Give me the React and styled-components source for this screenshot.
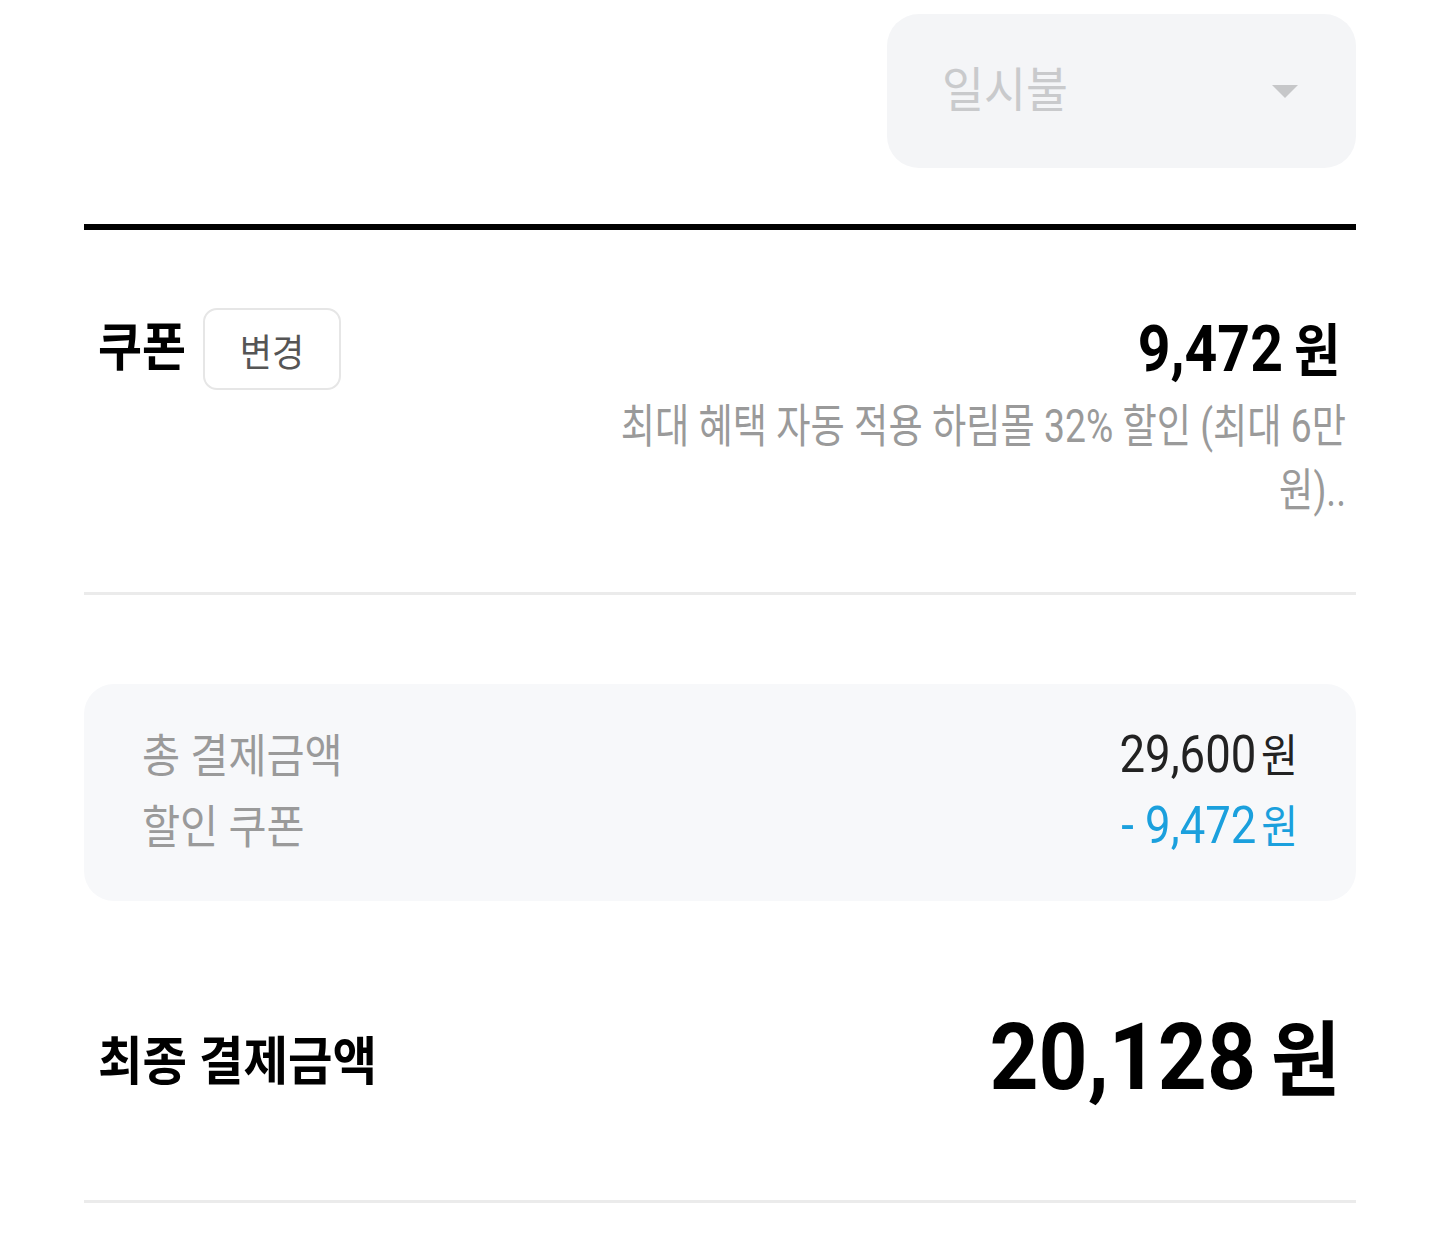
import React from "react";
import styled, { createGlobalStyle } from "styled-components";

const Global = createGlobalStyle`
  html, body { margin: 0; padding: 0; background: #ffffff; }
  body { font-family: Roboto, "Noto Sans CJK KR", sans-serif; color: #111; }
  * { box-sizing: border-box; }
`;

const Page = styled.main`
  width: 1440px;
  padding: 14px 84px 56px;
  display: flex;
  flex-direction: column;
`;

const Squeeze = styled.span`
  display: inline-block;
  white-space: nowrap;
  transform: scaleX(${(p) => p.$sx ?? 0.82});
  transform-origin: ${(p) => p.$origin ?? "left"} center;
`;

const Unit = styled.span`
  font-size: ${(p) => p.$scale ?? 0.88}em;
  margin-left: ${(p) => p.$gap ?? 0.18}em;
`;

/* ---------- installment select ---------- */
const SelectBox = styled.div`
  align-self: flex-end;
  width: 469px;
  height: 154px;
  border-radius: 32px;
  background: #f4f5f7;
  display: flex;
  align-items: center;
  justify-content: space-between;
  padding: 0 58px 0 55px;
`;

const SelectText = styled.span`
  font-size: 48px;
  color: #c9cacc;
  line-height: 1;
`;

const Caret = styled.svg`
  width: 26px;
  height: 13px;
  display: block;
`;

/* ---------- rules ---------- */
const ThickRule = styled.hr`
  margin: 56px 0 0;
  border: 0;
  height: 6px;
  background: #000;
`;

const ThinRule = styled.hr`
  margin: ${(p) => p.$top ?? 0}px 0 0;
  border: 0;
  height: 3px;
  background: #ebebeb;
`;

/* ---------- coupon ---------- */
const CouponSection = styled.section`
  padding: 78px 16px 70px 14px;
  display: flex;
  flex-direction: column;
`;

const CouponHead = styled.div`
  display: flex;
  align-items: center;
  justify-content: space-between;
`;

const TitleGroup = styled.div`
  display: flex;
  align-items: center;
  gap: 9px;
`;

const SectionTitle = styled.h2`
  margin: 0;
  font-size: 52px;
  font-weight: 700;
  line-height: 1;
  color: #000;
`;

const ChangeButton = styled.button`
  width: 138px;
  height: 82px;
  border: 2px solid #e6e6e6;
  border-radius: 14px;
  background: #fff;
  font-family: inherit;
  font-size: 38px;
  color: #555;
  display: flex;
  align-items: center;
  justify-content: center;
  padding: 0;
`;

const CouponAmount = styled.div`
  font-size: 65px;
  font-weight: 700;
  line-height: 1;
  color: #000;
`;

const CouponDesc = styled.p`
  margin: 4px -6px 0 auto;
  width: 920px;
  font-size: 46px;
  line-height: 64px;
  color: #9a9a9a;
  text-align: right;
  transform: scaleX(0.81);
  transform-origin: right top;
`;

/* ---------- summary ---------- */
const SummaryBox = styled.section`
  margin-top: 89px;
  background: #f7f8fa;
  border-radius: 30px;
  padding: 32px 58px 43px;
  display: flex;
  flex-direction: column;
`;

const SummaryRow = styled.div`
  display: flex;
  align-items: center;
  justify-content: space-between;
  height: 71px;
`;

const SummaryLabel = styled.span`
  font-size: 46px;
  color: #9a9a9a;
`;

const SummaryValue = styled.span`
  font-size: 52px;
  color: ${(p) => p.$color ?? "#222"};
`;

/* ---------- final ---------- */
const FinalRow = styled.section`
  margin-top: 101px;
  height: 110px;
  padding: 0 16px 0 14px;
  display: flex;
  align-items: center;
  justify-content: space-between;
`;

const FinalLabel = styled.h2`
  margin: 0;
  font-size: 52px;
  font-weight: 700;
  color: #000;
`;

const FinalAmount = styled.div`
  font-size: 93px;
  font-weight: 700;
  line-height: 1;
  color: #000;
`;

export default function App() {
  return (
    <>
      <Global />
      <Page>
        <SelectBox>
          <SelectText>
            <Squeeze $sx={0.95}>일시불</Squeeze>
          </SelectText>
          <Caret viewBox="0 0 26 13" aria-hidden="true">
            <polygon points="0,0 26,0 13,13" fill="#c6c7c9" />
          </Caret>
        </SelectBox>

        <ThickRule />

        <CouponSection>
          <CouponHead>
            <TitleGroup>
              <SectionTitle>
                <Squeeze $sx={0.92}>쿠폰</Squeeze>
              </SectionTitle>
              <ChangeButton>
                <Squeeze $sx={0.92} $origin="center">변경</Squeeze>
              </ChangeButton>
            </TitleGroup>
            <CouponAmount>
              <Squeeze $sx={0.88} $origin="right">
                9,472<Unit $gap={0.22}>원</Unit>
              </Squeeze>
            </CouponAmount>
          </CouponHead>
          <CouponDesc>최대 혜택 자동 적용 하림몰 32% 할인 (최대 6만 원)..</CouponDesc>
        </CouponSection>

        <ThinRule />

        <SummaryBox>
          <SummaryRow>
            <SummaryLabel>
              <Squeeze $sx={0.9}>총 결제금액</Squeeze>
            </SummaryLabel>
            <SummaryValue>
              <Squeeze $sx={0.875} $origin="right">
                29,600<Unit $gap={0.12}>원</Unit>
              </Squeeze>
            </SummaryValue>
          </SummaryRow>
          <SummaryRow>
            <SummaryLabel>
              <Squeeze $sx={0.9}>할인 쿠폰</Squeeze>
            </SummaryLabel>
            <SummaryValue $color="#1ba0dd">
              <Squeeze $sx={0.875} $origin="right">
                - 9,472<Unit $gap={0.12}>원</Unit>
              </Squeeze>
            </SummaryValue>
          </SummaryRow>
        </SummaryBox>

        <FinalRow>
          <FinalLabel>
            <Squeeze $sx={0.93}>최종 결제금액</Squeeze>
          </FinalLabel>
          <FinalAmount>
            <Squeeze $sx={0.92} $origin="right">
              20,128<Unit $gap={0.2}>원</Unit>
            </Squeeze>
          </FinalAmount>
        </FinalRow>

        <ThinRule $top={88} />
      </Page>
    </>
  );
}
